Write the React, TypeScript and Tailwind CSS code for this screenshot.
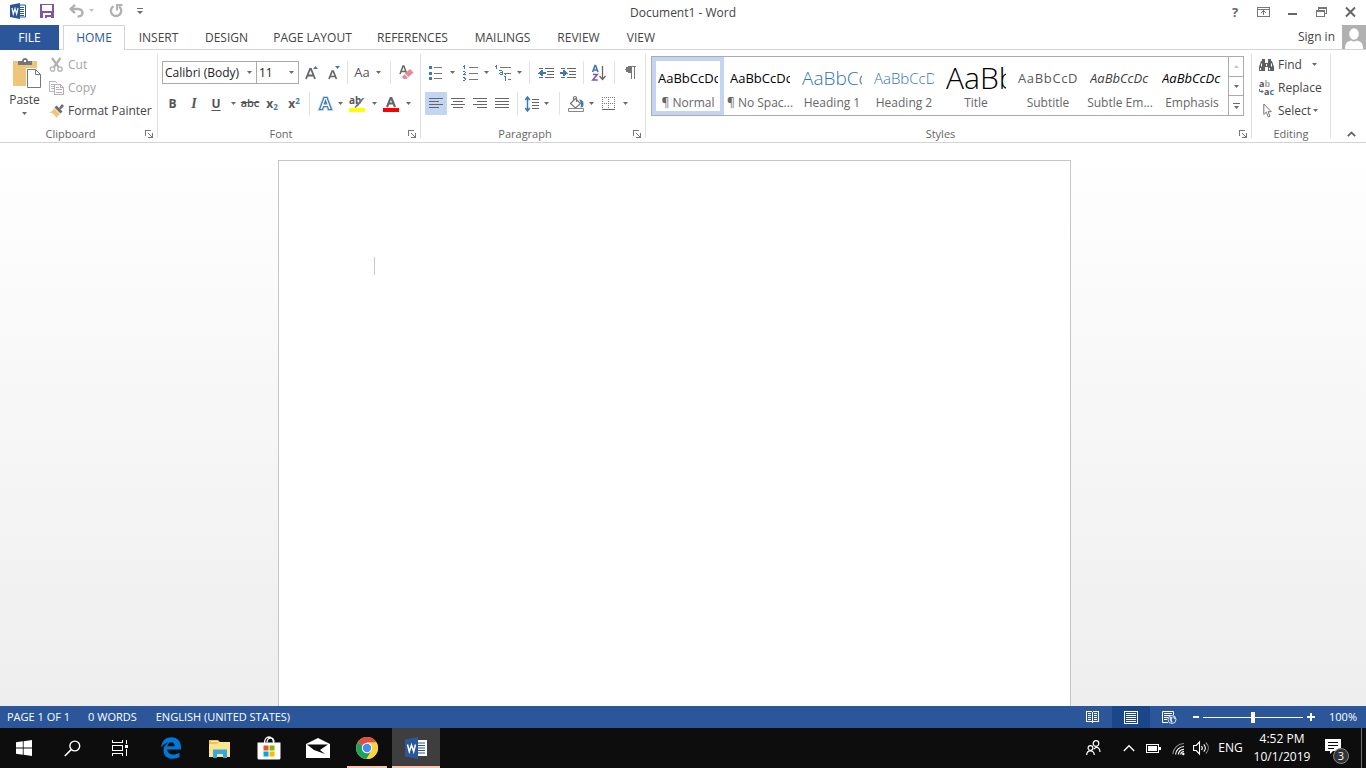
import type { ReactNode } from "react";

type IconProps = { w: number; h: number; crisp?: boolean; children: ReactNode };

function Icon({ w, h, crisp, children }: IconProps) {
  return (
    <svg
      width={w}
      height={h}
      viewBox={`0 0 ${w} ${h}`}
      fill="none"
      aria-hidden="true"
      shapeRendering={crisp ? "crispEdges" : undefined}
      className="block shrink-0 overflow-visible"
    >
      {children}
    </svg>
  );
}

function Caret({ color = "#6a6a6a" }: { color?: string }) {
  return (
    <Icon w={5} h={3}>
      <path d="M0 0h5L2.500 3z" fill={color} />
    </Icon>
  );
}

function CaretButton({ label, className }: { label: string; className: string }) {
  return (
    <button type="button" aria-label={label} className={`flex h-full items-center justify-center ${className}`}>
      <Caret />
    </button>
  );
}

function Tool({ label, className = "w-[22px]", children }: { label: string; className?: string; children: ReactNode }) {
  return (
    <button
      type="button"
      aria-label={label}
      className={`flex h-full shrink-0 items-center justify-center ${className}`}
    >
      {children}
    </button>
  );
}

function Divider({ className = "w-[9px]" }: { className?: string }) {
  return (
    <span className={`flex h-full shrink-0 justify-center ${className}`}>
      <span className="w-px bg-[#e1e1e1]" />
    </span>
  );
}

function Launcher({ label }: { label: string }) {
  return (
    <button type="button" aria-label={label} className="flex w-4 items-center justify-center">
      <Icon w={8} h={8} crisp>
        <path d="M0 0h6v1H1v5H0zM7 3h1v5H3V7h3V6h1zM3 3h1v1h1v1h1v1H5V5H4V4H3z" fill="#777" />
      </Icon>
    </button>
  );
}

type GroupProps = { title: string; launcher?: boolean; className?: string; children: ReactNode };

function Group({ title, launcher = true, className = "", children }: GroupProps) {
  return (
    <section aria-label={title} className={`flex flex-col border-r border-[#e1e1e1] ${className}`}>
      <div className="h-[75px] shrink-0">{children}</div>
      <div className="flex h-[9px] items-center">
        <h2 className="flex-1 text-center text-[11px] leading-4 text-[#666]">{title}</h2>
        {launcher && <Launcher label={`${title} settings`} />}
      </div>
    </section>
  );
}

function WordLogo() {
  return (
    <Icon w={16} h={16}>
      <path d="M9 2h6.500v12H9z" fill="#fff" stroke="#2b579a" />
      <path d="M10 4.500h4M10 6.500h4M10 8.500h4M10 10.500h4M10 12.500h4" stroke="#2b579a" />
      <path d="M0 2 10 0v16L0 14z" fill="#2b579a" />
      <path d="m2 5 1.300 6L5 5.500 6.600 11 8 5" stroke="#fff" strokeWidth="1.200" />
    </Icon>
  );
}

function TitleBar() {
  return (
    <header className="grid h-[25px] shrink-0 grid-cols-[1fr_auto_1fr] items-center">
      <div className="flex h-full items-center pb-1 pl-[10px]">
        <WordLogo />
        <button type="button" aria-label="Save" className="ml-[14px]">
          <Icon w={14} h={14} crisp>
            <path d="M0 0h14v14H0z" fill="#8254a5" />
            <path d="M2 1h10v6H2zM3 9h8v5H3z" fill="#fff" />
            <path d="M5 11h2v3H5z" fill="#8254a5" />
            <path d="M7 11h4v2H7z" fill="#8254a5" />
          </Icon>
        </button>
        <button type="button" aria-label="Undo" className="ml-[15px]">
          <Icon w={15} h={14}>
            <path d="M1.500 5h7.500c6 0 6 7.500-.5 7.500M6 .8 1.600 5 6 9.200" stroke="#b1b1b1" strokeWidth="2.400" />
          </Icon>
        </button>
        <button type="button" aria-label="Undo options" className="ml-[5px]">
          <Caret color="#c3c3c3" />
        </button>
        <button type="button" aria-label="Repeat" className="ml-[15px]">
          <Icon w={14} h={14}>
            <path d="M4.600 2.200A5.200 5.200 0 1 0 10 2.500" stroke="#b1b1b1" strokeWidth="2.400" />
            <path d="M8 6.500V1h5.500" stroke="#b1b1b1" strokeWidth="2" />
          </Icon>
        </button>
        <button type="button" aria-label="Customize Quick Access Toolbar" className="ml-[14px]">
          <Icon w={6} h={6}>
            <path d="M0 0h6v1H0zM0 3h6L3 6z" fill="#6a6a6a" />
          </Icon>
        </button>
      </div>
      <h1 className="text-[12px] text-[#444]">Document1 - Word</h1>
      <div className="flex h-full items-center justify-end gap-[18px] pb-[2px] pr-[10px]">
        <button type="button" className="w-2 text-[13px] font-bold leading-4 text-[#666]" aria-label="Help">
          ?
        </button>
        <button type="button" aria-label="Ribbon display options">
          <Icon w={13} h={10} crisp>
            <path d="M.5.5h12v9H.5zM1 2.500h11M6.500 4v4" stroke="#777" />
            <path d="M6 3h1v1h1v1h1v1H8V5H5v1H4V5h1V4h1z" fill="#777" />
          </Icon>
        </button>
        <button type="button" aria-label="Minimize">
          <Icon w={10} h={10} crisp>
            <path d="M0 6h9v2H0z" fill="#666" />
          </Icon>
        </button>
        <button type="button" aria-label="Restore">
          <Icon w={11} h={10} crisp>
            <path d="M2.500 3V.5h8v6H8M2 1.500h9M.5 3.500h8v6h-8zM0 4.500h8" stroke="#777" />
          </Icon>
        </button>
        <button type="button" aria-label="Close">
          <Icon w={11} h={10}>
            <path d="m1 .5 9 9M10 .5l-9 9" stroke="#666" strokeWidth="2" />
          </Icon>
        </button>
      </div>
    </header>
  );
}

const tabs = [
  { name: "INSERT", width: "w-[67px]" },
  { name: "DESIGN", width: "w-[69px]" },
  { name: "PAGE LAYOUT", width: "w-[103px]" },
  { name: "REFERENCES", width: "w-[97px]" },
  { name: "MAILINGS", width: "w-[83px]" },
  { name: "REVIEW", width: "w-[69px]" },
  { name: "VIEW", width: "w-[56px]" },
];

function TabBar() {
  return (
    <nav className="flex h-[25px] shrink-0 text-[12px] text-[#444]">
      <button type="button" className="w-[59px] bg-[#2b579a] pt-px text-white">
        FILE
      </button>
      <span className="w-1 border-b border-[#d4d4d4]" />
      <button type="button" className="w-[62px] border-x border-t border-[#d4d4d4] bg-white text-[#2b579a]">
        HOME
      </button>
      {tabs.map((tab) => (
        <button
          key={tab.name}
          type="button"
          className={`border-b border-[#d4d4d4] pt-[2px] whitespace-nowrap ${tab.width}`}
        >
          {tab.name}
        </button>
      ))}
      <div className="flex flex-1 justify-end gap-[7px] border-b border-[#d4d4d4]">
        <button type="button">Sign in</button>
        <Icon w={24} h={24}>
          <path d="M0 0h24v24H0z" fill="#b1b1b1" />
          <ellipse cx="12" cy="9" rx="4.800" ry="5.800" fill="#fff" />
          <path d="M3 24c0-6 2-7.500 6-8.500 2 1.300 4 1.300 6 0 4 1 6 2.500 6 8.500z" fill="#fff" />
        </Icon>
      </div>
    </nav>
  );
}

function ClipboardGroup() {
  return (
    <Group title="Clipboard" className="w-[158px]">
      <div className="flex">
        <button type="button" className="flex w-[49px] flex-col items-center pt-1 text-[12px] leading-4 text-[#444]">
          <Icon w={24} h={30}>
            <path d="M0 3h24v25H0z" fill="#efc57b" />
            <path d="M5 7V3h4c0-4 6-4 6 0h4v4z" fill="#777" />
            <path d="M11 2h2v2h-2z" fill="#fff" />
            <path d="M13 10h10l6 6v14H13z" fill="#fff" />
            <path d="M14.500 11.500h8l5 5v13h-13zM22.500 11.500v5h5" fill="#fff" stroke="#777" />
          </Icon>
          <span className="mt-1">Paste</span>
          <span className="mt-1">
            <Caret />
          </span>
        </button>
        <div className="flex flex-col text-[12px] leading-4">
          <button type="button" disabled className="flex h-[23px] items-center gap-1 pb-[2px] text-[#a3a3a3]">
            <Icon w={15} h={15}>
              <path d="m3 1 6.500 9M11.500 1 5 10" stroke="#b1b1b1" strokeWidth="2.200" />
              <circle cx="3.500" cy="12" r="2.200" stroke="#b1b1b1" strokeWidth="1.300" />
              <circle cx="11" cy="12" r="2.200" stroke="#b1b1b1" strokeWidth="1.300" />
            </Icon>
            Cut
          </button>
          <button type="button" disabled className="flex h-[23px] items-center gap-1 pb-[2px] text-[#a3a3a3]">
            <Icon w={15} h={14} crisp>
              <path d="M5.500 10.500h-5V.5h6l2 2" stroke="#bdb5bd" />
              <path d="M2 3.500h3M2 5.500h3M2 7.500h3" stroke="#bdb5bd" />
              <path d="M5.500 3.500h6l3 3v7h-9zM11.500 3.500v3h3M7 6.500h3M7 8.500h6M7 11.500h6" stroke="#b8adb8" fill="#fff" />
            </Icon>
            Copy
          </button>
          <button
            type="button"
            className="flex h-[23px] items-center gap-1 pb-[2px] whitespace-nowrap text-[#444]"
          >
            <Icon w={15} h={14}>
              <path d="m5 4 6 6-4 4C6 10 3 9 0 8c2 0 4-1 5-4z" fill="#efc57b" />
              <path d="m5.500 3.500 2-2 6 6-2 2z" fill="#6a6a6a" />
              <path d="m10 4 3-4 2 2-3.500 3.500z" fill="#6a6a6a" />
            </Icon>
            Format Painter
          </button>
        </div>
      </div>
    </Group>
  );
}

const blue = "#3e7ab5";

function FontGroup() {
  return (
    <Group title="Font" className="w-[263px]">
      <div className="flex flex-col gap-2 pl-1 pt-[7px] text-[#555]">
        <div className="flex h-[23px]">
          <label className="flex w-[95px] items-center border border-[#ababab]">
            <input
              aria-label="Font"
              defaultValue="Calibri (Body)"
              className="w-0 flex-1 pl-[2px] text-[12px] text-[#222] outline-none"
            />
            <span className="pr-1">
              <Caret />
            </span>
          </label>
          <label className="-ml-px flex w-[43px] items-center border border-[#ababab]">
            <input
              aria-label="Font size"
              defaultValue="11"
              className="w-0 flex-1 pl-[2px] text-[12px] text-[#222] outline-none"
            />
            <span className="pr-1">
              <Caret />
            </span>
          </label>
          <Tool label="Grow font" className="w-6">
            <Icon w={13} h={15}>
              <path d="m1 14 4-10h1l4 10M2.500 10.500h6" stroke="#666" strokeWidth="1.800" />
              <path d="M8 4h5l-2.500-3z" fill={blue} />
            </Icon>
          </Tool>
          <Tool label="Shrink font">
            <Icon w={12} h={15}>
              <path d="m1 14 3.200-8h1l3.200 8M2.200 11.500h5" stroke="#666" strokeWidth="1.700" />
              <path d="M7 1h5l-2.500 3z" fill={blue} />
            </Icon>
          </Tool>
          <Divider className="w-[5px]" />
          <Tool label="Change case" className="w-6 text-[13px]">
            Aa
          </Tool>
          <CaretButton label="Change case options" className="w-2" />
          <Divider className="w-4" />
          <Tool label="Clear all formatting" className="w-4">
            <Icon w={15} h={15}>
              <path d="m1 9 3-8h.8l2.700 7M2 6.500h5" stroke="#666" strokeWidth="1.500" />
              <path d="m6 8.500 5-4.500 3.500 3.500-5 4.500z" fill="#e8899a" />
              <path d="m5.300 9.200 3.500 3.500-1.300 1.300H4.700L3 12z" fill="#e8899a" />
            </Icon>
          </Tool>
        </div>
        <div className="flex h-[23px]">
          <Tool label="Bold" className="w-[21px]">
            <span className="text-[12px] font-bold">B</span>
          </Tool>
          <Tool label="Italic">
            <span className="font-['Liberation_Serif',serif] text-[14px] font-bold italic">I</span>
          </Tool>
          <Tool label="Underline">
            <span className="text-[12px] font-bold underline underline-offset-2">U</span>
          </Tool>
          <CaretButton label="Underline options" className="w-3" />
          <Tool label="Strikethrough">
            <span className="text-[11px] font-semibold line-through">abc</span>
          </Tool>
          <Tool label="Subscript">
            <span className="text-[12px] font-bold">
              x<sub className="text-[8px] text-[#3e7ab5]">2</sub>
            </span>
          </Tool>
          <Tool label="Superscript">
            <span className="text-[12px] font-bold">
              x<sup className="text-[8px] text-[#3e7ab5]">2</sup>
            </span>
          </Tool>
          <Divider />
          <Tool label="Text effects">
            <Icon w={15} h={15}>
              <path
                d="M1.500 13.500 6 1.500h3l4.500 12h-3l-1-3h-4l-1 3zM6.300 8h2.400L7.500 4.500z"
                fill="#fff"
                stroke="#c3d9f1"
                strokeWidth="3"
              />
              <path
                d="M1.500 13.500 6 1.500h3l4.500 12h-3l-1-3h-4l-1 3zM6.300 8h2.400L7.500 4.500z"
                fill="#fff"
                stroke={blue}
                strokeWidth="1.200"
              />
            </Icon>
          </Tool>
          <CaretButton label="Text effects options" className="w-2" />
          <Tool label="Text highlight color" className="w-[26px]">
            <Icon w={16} h={16}>
              <text x="0" y="8" fontSize="10" fontWeight="700" fill="#555">
                ab
              </text>
              <path d="m15.500 2-6 7.500-3 2.500-1-1 2.500-3 5.500-6z" fill="#777" />
              <path d="M0 12h16v4H0z" fill="#ff0" />
            </Icon>
          </Tool>
          <CaretButton label="Highlight color options" className="w-2" />
          <Tool label="Font color" className="w-[26px]">
            <Icon w={16} h={16}>
              <path d="m4 11 3.600-9h.8l3.600 9M5.300 7.500h5.400" stroke="#666" strokeWidth="2.100" />
              <path d="M0 12h16v4H0z" fill="#f00" />
            </Icon>
          </Tool>
          <CaretButton label="Font color options" className="w-2" />
        </div>
      </div>
    </Group>
  );
}

function AlignIcon({ d }: { d: string }) {
  return (
    <Icon w={14} h={11} crisp>
      <path d={d} stroke="#666" />
    </Icon>
  );
}

function ParagraphGroup() {
  return (
    <Group title="Paragraph" className="w-[225px]">
      <div className="flex flex-col gap-2 pl-1 pt-[7px]">
        <div className="flex h-[23px]">
          <Tool label="Bullets">
            <Icon w={14} h={15} crisp>
              <path d="M5 2.500h8M5 8.500h8M5 13.500h8" stroke="#777" />
              <path d="M0 1h3v3H0zM0 7h3v3H0zM0 12h3v3H0z" fill={blue} />
            </Icon>
          </Tool>
          <CaretButton label="Bullet options" className="w-[11px]" />
          <Tool label="Numbering" className="w-6">
            <Icon w={15} h={16} crisp>
              <path d="M6 2.500h9M6 8.500h9M6 14.500h9" stroke="#777" />
              <path
                d="M1 0h1v4H1zM0 1h1v1H0zM0 6h2v1H0zM2 7h1v1H2zM1 8h1v1H1zM0 9h3v1H0zM0 12h2v1H0zM2 13h1v2H2zM1 13h1v1H1zM0 15h2v1H0z"
                fill={blue}
              />
            </Icon>
          </Tool>
          <CaretButton label="Numbering options" className="w-[9px]" />
          <Tool label="Multilevel list" className="w-6">
            <Icon w={17} h={16} crisp>
              <path d="M5 2.500h11M9 8.500h7M13 14.500h3" stroke="#777" />
              <path
                d="M1 0h1v4H1zM0 1h1v1H0zM4 5h3v1H4zM7 6h1v4H7zM5 7h2v1H5zM4 8h1v1H4zM5 9h2v1H5zM10 9h1v1h-1zM9 11h2v5h-1v-4H9z"
                fill={blue}
              />
            </Icon>
          </Tool>
          <CaretButton label="Multilevel options" className="w-2" />
          <Divider className="w-3" />
          <Tool label="Decrease indent">
            <Icon w={16} h={12} crisp>
              <path d="M1 1.500h4M7 1.500h9M9 4.500h7M9 7.500h7M1 10.500h4M7 10.500h9" stroke="#666" />
              <path d="M0 6h1V5h1V4h1V3h2v2h3v2H5v2H3V8H2V7H0z" fill={blue} />
            </Icon>
          </Tool>
          <Tool label="Increase indent">
            <Icon w={16} h={12} crisp>
              <path d="M1 1.500h4M7 1.500h9M9 4.500h7M9 7.500h7M1 10.500h4M7 10.500h9" stroke="#666" />
              <path d="M8 6H7V5H6V4H5V3H3v2H0v2h3v2h2V8h1V7h2z" fill={blue} />
            </Icon>
          </Tool>
          <Divider />
          <Tool label="Sort">
            <Icon w={14} h={16}>
              <path d="m.6 7 2.400-6.500h.6L6 7M1.500 5h3.700" stroke={blue} strokeWidth="1.600" />
              <path d="M1 9.500h4.300l-4.500 5.500h5" stroke="#8254a5" strokeWidth="1.500" />
              <path d="M10.500 1v13M7.500 11l3 3.500 3-3.500" stroke="#666" strokeWidth="1.300" />
            </Icon>
          </Tool>
          <Divider />
          <Tool label="Show paragraph marks">
            <Icon w={11} h={13} crisp>
              <path d="M4 0h7v1h-1v12H9V1H7v12H6V7H4C-1 7-1 0 4 0z" fill="#777" />
            </Icon>
          </Tool>
        </div>
        <div className="flex h-[23px]">
          <Tool label="Align left" className="w-[22px] bg-[#c2d5f2]">
            <AlignIcon d="M0 .5h14M0 3.500h10M0 6.500h14M0 9.500h10" />
          </Tool>
          <Tool label="Center">
            <AlignIcon d="M0 .5h14M2 3.500h10M0 6.500h14M2 9.500h10" />
          </Tool>
          <Tool label="Align right">
            <AlignIcon d="M0 .5h14M4 3.500h10M0 6.500h14M4 9.500h10" />
          </Tool>
          <Tool label="Justify">
            <AlignIcon d="M0 .5h14M0 3.500h14M0 6.500h14M0 9.500h14" />
          </Tool>
          <Divider />
          <Tool label="Line spacing" className="w-5">
            <Icon w={14} h={16}>
              <path d="M2.500 1v14M.3 4l2.200-3 2.300 3M.3 12l2.200 3 2.300-3" stroke={blue} strokeWidth="1.500" />
              <path d="M7 3.500h7M7 6.500h7M7 9.500h7M7 12.500h7" stroke="#666" />
            </Icon>
          </Tool>
          <CaretButton label="Line spacing options" className="w-2" />
          <Divider className="w-[18px]" />
          <Tool label="Shading" className="w-4">
            <Icon w={16} h={16}>
              <path d="m2.500 7.500 5-5 5 5-5 4.500z" stroke="#777" strokeWidth="1.200" fill="#fff" />
              <path d="M5.500 5V2c0-2 3-2 3 0v4" stroke="#777" strokeWidth="1.200" />
              <path d="M11 3.500c4 0 5.500 3 4 7.500l-2.500.5c1-3 .5-5-1.500-8z" fill={blue} />
              <path d="M.5 12.500h15v3H.5z" fill="#fff" stroke="#888" />
            </Icon>
          </Tool>
          <CaretButton label="Shading options" className="w-[14px]" />
          <Tool label="Borders" className="w-5">
            <Icon w={13} h={13} crisp>
              <path d="M0 .5h13M0 6.500h13M.5 0v12M6.500 0v12M12.500 0v12" stroke="#777" strokeDasharray="1 1" />
              <path d="M0 12.500h13" stroke="#666" />
            </Icon>
          </Tool>
          <CaretButton label="Border options" className="w-[14px]" />
        </div>
      </div>
    </Group>
  );
}

const styles = [
  { name: "¶ Normal", sample: "AaBbCcDc", look: "text-[13px] text-black" },
  { name: "¶ No Spac...", sample: "AaBbCcDc", look: "text-[13px] text-black" },
  { name: "Heading 1", sample: "AaBbCc", look: "text-[19px] font-light text-[#2e74b5]" },
  { name: "Heading 2", sample: "AaBbCcD", look: "text-[15px] font-light text-[#2e74b5]" },
  { name: "Title", sample: "AaBb", look: "text-[30px] font-light text-black" },
  { name: "Subtitle", sample: "AaBbCcD", look: "text-[13px] tracking-wider text-[#5a5a5a]" },
  { name: "Subtle Em...", sample: "AaBbCcDc", look: "text-[13px] italic text-[#404040]" },
  { name: "Emphasis", sample: "AaBbCcDc", look: "text-[13px] italic text-black" },
];

function StylesGroup() {
  return (
    <Group title="Styles" className="min-w-0 flex-1">
      <div className="pt-[2px] pr-[7px] pl-[5px]">
        <div className="flex h-[60px] border border-[#ababab]">
          <div className="flex min-w-0 flex-1 overflow-hidden">
            {styles.map((style, i) => (
              <button
                key={style.name}
                type="button"
                className={`flex w-[72px] shrink-0 flex-col items-center border-4 ${
                  i === 0 ? "border-[#c2d5f2]" : "border-transparent"
                }`}
              >
                <span
                  className={`flex h-[34px] w-[60px] items-center overflow-hidden whitespace-nowrap leading-none ${style.look}`}
                >
                  {style.sample}
                </span>
                <span className="text-[12px] leading-4 whitespace-nowrap text-[#666]">{style.name}</span>
              </button>
            ))}
          </div>
          <div className="flex w-[15px] flex-col border-l border-[#ababab]">
            <button type="button" aria-label="Previous styles" className="flex flex-1 items-center justify-center">
              <Icon w={5} h={3}>
                <path d="M0 3h5L2.500 0z" fill="#c6c6c6" />
              </Icon>
            </button>
            <button
              type="button"
              aria-label="Next styles"
              className="flex flex-1 items-center justify-center border-y border-[#ababab]"
            >
              <Caret />
            </button>
            <button type="button" aria-label="More styles" className="flex flex-1 items-center justify-center">
              <Icon w={7} h={6}>
                <path d="M0 0h7v1H0zM1 3h5L3.500 6z" fill="#6a6a6a" />
              </Icon>
            </button>
          </div>
        </div>
      </div>
    </Group>
  );
}

function EditingGroup() {
  return (
    <Group title="Editing" launcher={false} className="w-[79px]">
      <div className="flex flex-col pl-[7px] text-[12px] leading-4 whitespace-nowrap text-[#444]">
        <button type="button" className="flex h-[23px] items-center gap-1 pb-[2px]">
          <Icon w={15} h={12}>
            <path d="M2 2h4v2h3V2h4l2 6v4H9V8H6v4H0V8z" fill="#5f5f5f" />
            <path d="M3 0h3v2H3zM9 0h3v2H9z" fill="#5f5f5f" />
            <path d="M2.500 4.500v3M12.500 4.500v3M1.500 9v2M10.500 9v2M7.500 5v2" stroke="#fff" />
          </Icon>
          <span className="mr-[6px]">Find</span>
          <Caret />
        </button>
        <button type="button" className="flex h-[23px] items-center gap-1 pb-[2px]">
          <Icon w={15} h={16}>
            <text x="0" y="7" fontSize="9" fontWeight="700" fill="#555">
              a<tspan fill="#aaa">b</tspan>
            </text>
            <text x="5" y="15" fontSize="9" fontWeight="700" fill="#555">
              a<tspan fill={blue}>c</tspan>
            </text>
            <path d="M.5 9v2.500H4M2.500 10 4 11.500 2.500 13" stroke={blue} />
          </Icon>
          Replace
        </button>
        <button type="button" className="flex h-[23px] items-center pb-[2px]">
          <span className="flex w-[19px] justify-center pr-[2px]">
            <Icon w={9} h={15}>
              <path d="M.8 1v10.500l2.500-2.300 2 4.800 1.700-.8-2-4.500h3.300z" stroke="#777" />
            </Icon>
          </span>
          <span className="mr-[2px]">Select</span>
          <Caret />
        </button>
      </div>
    </Group>
  );
}

function Ribbon() {
  return (
    <div className="flex h-[93px] shrink-0 border-b border-[#d4d4d4] bg-white py-1">
      <ClipboardGroup />
      <FontGroup />
      <ParagraphGroup />
      <StylesGroup />
      <EditingGroup />
      <div className="flex w-[35px] items-end justify-center pl-[5px]">
        <button type="button" aria-label="Collapse the ribbon" className="pb-[1px]">
          <Icon w={9} h={6}>
            <path d="M.8 5.200 4.500 1.500l3.700 3.700" stroke="#666" strokeWidth="1.800" />
          </Icon>
        </button>
      </div>
    </div>
  );
}

function StatusBar() {
  return (
    <footer className="flex h-[22px] shrink-0 items-center bg-[#2b579a] text-[11px] text-white">
      <span className="pl-[7px]">PAGE 1 OF 1</span>
      <span className="pl-[18px]">0 WORDS</span>
      <span className="pl-[19px]">ENGLISH (UNITED STATES)</span>
      <div className="ml-auto flex h-full items-center">
        <button type="button" aria-label="Read mode" className="flex h-full w-[39px] items-center justify-center">
          <Icon w={13} h={12} crisp>
            <path
              d="M.5.5h5l1 1 1-1h5v10h-5l-1 1-1-1h-5zM6.500 1v11M2 2.500h3M2 4.500h3M2 6.500h3M2 8.500h3M8 2.500h3M8 4.500h3M8 6.500h3M8 8.500h3"
              stroke="#fff"
            />
          </Icon>
        </button>
        <button
          type="button"
          aria-label="Print layout"
          className="flex h-full w-[38px] items-center justify-center bg-[#19478a]"
        >
          <Icon w={14} h={13} crisp>
            <path d="M.5.5h13v12H.5zM2 2.500h10M2 4.500h10M2 6.500h10M2 8.500h10M2 10.500h10" stroke="#fff" />
          </Icon>
        </button>
        <button type="button" aria-label="Web layout" className="flex h-full w-[38px] items-center justify-center">
          <Icon w={15} h={13}>
            <path d="M6 11.500H.5V.5h11V4M2 2.500h8M2 4.500h8M2 6.500h4M2 8.500h3" stroke="#fff" />
            <circle cx="10" cy="8.500" r="4" fill="#2b579a" stroke="#d5dfee" />
            <path d="M7.500 6.500c2-1.500 4-.5 2.500 1.500-1 1 1.500 2 0 4-1.500-1-2.500-3-2.500-5.500zM11 5c2 .5 2.500 2 2.500 3.500-1.500 0-2-1.500-2.500-3.500z" fill="#d5dfee" />
          </Icon>
        </button>
        <button type="button" aria-label="Zoom out" className="ml-[5px] flex h-full items-center">
          <Icon w={6} h={2} crisp>
            <path d="M0 0h6v2H0z" fill="#fff" />
          </Icon>
        </button>
        <input
          type="range"
          aria-label="Zoom"
          min={10}
          max={190}
          defaultValue={100}
          className="mx-1 h-[11px] w-[100px] appearance-none bg-[linear-gradient(#fff,#fff)] bg-[length:100%_1px] bg-center bg-no-repeat [&::-webkit-slider-thumb]:h-[11px] [&::-webkit-slider-thumb]:w-1 [&::-webkit-slider-thumb]:appearance-none [&::-webkit-slider-thumb]:bg-white"
        />
        <button type="button" aria-label="Zoom in" className="flex h-full items-center">
          <Icon w={8} h={8} crisp>
            <path d="M3 0h2v3h3v2H5v3H3V5H0V3h3z" fill="#fff" />
          </Icon>
        </button>
        <button type="button" className="w-[51px] pr-[9px] text-right">
          100%
        </button>
      </div>
    </footer>
  );
}

function TaskButton({
  label,
  className = "w-12",
  children,
}: {
  label: string;
  className?: string;
  children: ReactNode;
}) {
  return (
    <button type="button" aria-label={label} className={`flex items-center justify-center ${className}`}>
      {children}
    </button>
  );
}

function Taskbar() {
  return (
    <footer className="flex h-10 shrink-0 justify-between bg-[#0d0d0d] text-white">
      <div className="flex">
        <TaskButton label="Start">
          <Icon w={16} h={16}>
            <path
              d="M0 2.300 6.800 1.300v6.300H0zM7.600 1.200 16 0v7.600H7.600zM0 8.400h6.800v6.300L0 13.700zM7.600 8.400H16V16l-8.400-1.200z"
              fill="#fff"
            />
          </Icon>
        </TaskButton>
        <TaskButton label="Search">
          <Icon w={17} h={17}>
            <circle cx="10.800" cy="6" r="4.900" stroke="#fff" strokeWidth="1.400" />
            <path d="M7.200 9.600.8 16" stroke="#fff" strokeWidth="1.500" />
          </Icon>
        </TaskButton>
        <TaskButton label="Task view">
          <Icon w={17} h={16} crisp>
            <path d="M.5 0v2.500h10V0M.5 5.500h10v5H.5zM.5 16v-2.500h10V16M14.500 0v4M14.500 9v7" stroke="#fff" />
            <path d="M13 5h3v3h-3z" fill="#fff" />
          </Icon>
        </TaskButton>
        <div className="ml-[3px] flex gap-px">
          <TaskButton label="Edge">
            <Icon w={20} h={22}>
              <path
                d="M0 10.500C1 3 5 .2 10.500.2 17 .2 20 5 20 10v2.600H6.200c.3 5.200 7 6.400 12.300 3.200v4.300C10.500 24 2.500 21 2.500 13.500c0-4 2.500-6.500 5.300-8C4.500 6 2 7.500 0 10.500zM6.300 9.200h7.400c0-5.400-6.600-5-7.400 0z"
                fill="#0078d7"
              />
            </Icon>
          </TaskButton>
          <TaskButton label="File Explorer">
            <Icon w={22} h={19}>
              <path d="M0 1h9l2 2h10v15H0z" fill="#f3c04c" />
              <path d="M0 5h8l2-2h11v15H0z" fill="#fde48f" />
              <path d="M4 10.500h14V19h-4v-4H8v4H4z" fill="#35a8e0" />
              <path d="M2 2h7v1H2z" fill="#fff3c4" />
            </Icon>
          </TaskButton>
          <TaskButton label="Microsoft Store">
            <Icon w={24} h={24}>
              <path d="M7.500 7c0-8 9-8 9 0M10 6.500c0-6 7-6 7 0" stroke="#fff" strokeWidth="1.300" />
              <path d="M.5 6.500h23V22q0 1.500-1.500 1.500H2q-1.500 0-1.500-1.500z" fill="#fff" />
              <path d="M6.500 9.500h5v5h-5z" fill="#f25022" />
              <path d="M12.500 9.500h5v5h-5z" fill="#7fba00" />
              <path d="M6.500 15.500h5v5h-5z" fill="#00a4ef" />
              <path d="M12.500 15.500h5v5h-5z" fill="#ffb900" />
            </Icon>
          </TaskButton>
          <TaskButton label="Mail">
            <Icon w={24} h={20}>
              <path d="M0 6 12 0l12 6v14H0z" fill="#fff" />
              <path d="M1 6.500h21L14 12l5 4L8 12z" fill="#0d0d0d" />
            </Icon>
          </TaskButton>
          <TaskButton label="Chrome" className="mx-1 w-10 shadow-[inset_0_-2px_#fac4b1]">
            <Icon w={22} h={22}>
              <circle cx="11" cy="11" r="11" fill="#fdd33c" />
              <path d="M11 11 1.500 5.500A11 11 0 0 1 20.500 5.500H11z" fill="#dd5044" />
              <path d="M1.500 5.500A11 11 0 0 0 10.500 22l5-8.400L11 11z" fill="#1fa15d" />
              <path d="M20.500 5.500H11l4.600 8L10.500 22A11 11 0 0 0 20.500 5.500z" fill="#fdd33c" />
              <circle cx="11" cy="11" r="5.200" fill="#fff" />
              <circle cx="11" cy="11" r="4.200" fill="#4a8af4" />
            </Icon>
          </TaskButton>
          <TaskButton label="Word" className="w-12 bg-[#3e3e3e] shadow-[inset_0_-2px_#fac4b1]">
            <Icon w={22} h={22}>
              <path d="M12 3h10v16H12z" fill="#fff" />
              <path d="M13 6h7M13 8.500h7M13 11h7M13 13.500h7M13 16h7" stroke="#2b579a" />
              <path d="M0 2.500 13 0v22L0 19.500z" fill="#2b579a" />
              <path d="m2.500 7.500 1.800 7 2.200-6.500 2.200 6.500 1.800-7" stroke="#fff" strokeWidth="1.500" />
            </Icon>
          </TaskButton>
        </div>
      </div>
      <div className="flex items-center text-[12px]">
        <button type="button" aria-label="People">
          <Icon w={15} h={16}>
            <circle cx="4.500" cy="8" r="2.400" stroke="#fff" strokeWidth="1.200" />
            <circle cx="10" cy="3.500" r="2.800" stroke="#fff" strokeWidth="1.200" />
            <path d="M.7 15c0-5.500 7.600-5.500 7.600 0M8 9c3-3.500 6-1 6 3" stroke="#fff" strokeWidth="1.200" />
          </Icon>
        </button>
        <button type="button" aria-label="Show hidden icons" className="ml-[22px]">
          <Icon w={12} h={8}>
            <path d="m.8 7 5.200-5.300L11.200 7" stroke="#fff" strokeWidth="1.300" />
          </Icon>
        </button>
        <button type="button" aria-label="Battery" className="ml-[11px]">
          <Icon w={15} h={9} crisp>
            <path d="M.5.5h12v8H.5z" stroke="#fff" />
            <path d="M2 2h9v5H2zM13 3h2v3h-2z" fill="#fff" />
          </Icon>
        </button>
        <button type="button" aria-label="Network" className="ml-[11px]">
          <Icon w={13} h={13}>
            <path d="M.8 12A11.500 11.500 0 0 1 12 1.500" stroke="#888" strokeWidth="1.200" />
            <path
              d="M3.600 12.500A8.500 8.500 0 0 1 12 4.500M6.300 12.500A6 6 0 0 1 12 7.300"
              stroke="#fff"
              strokeWidth="1.200"
            />
            <path d="M8.600 12.500A3.500 3.500 0 0 1 12 9.500" stroke="#fff" strokeWidth="1.200" />
            <circle cx="11.300" cy="12" r="1.200" fill="#fff" />
          </Icon>
        </button>
        <button type="button" aria-label="Volume" className="ml-2">
          <Icon w={17} h={14}>
            <path d="M.6 4.500h2.600L6.500 1v12L3.200 9.500H.6z" stroke="#fff" strokeWidth="1.100" />
            <path d="M8.500 5c1 1.200 1 2.800 0 4M10.700 3.300c2 2.200 2 5.200 0 7.400" stroke="#fff" strokeWidth="1.100" />
            <path d="M12.800 1.500c3.300 3.300 3.300 7.700 0 11" stroke="#888" strokeWidth="1.100" />
          </Icon>
        </button>
        <button type="button" className="w-[41px] text-center">
          ENG
        </button>
        <button type="button" className="w-[62px] text-center leading-[18px]">
          4:52 PM
          <br />
          10/1/2019
        </button>
        <button type="button" aria-label="Notifications" className="relative ml-3 mr-3 h-10 w-[24px]">
          <span className="flex pb-1">
            <Icon w={16} h={15}>
              <path d="M0 0h16v12H8l-3 3v-3H0z" fill="#fff" />
              <path d="M3 3.500h10M3 6.500h10M3 9.500h6" stroke="#0d0d0d" />
            </Icon>
          </span>
          <span className="absolute right-0 bottom-1 flex size-4 items-center justify-center rounded-full border border-[#888] bg-[#333] text-[11px]">
            3
          </span>
        </button>
        <span className="mr-1 h-full w-px bg-[#6e6e6e]" />
      </div>
    </footer>
  );
}

export default function App() {
  return (
    <div className="flex h-screen flex-col overflow-hidden bg-white font-['Open_Sans','Noto_Sans',sans-serif] leading-normal">
      <TitleBar />
      <TabBar />
      <Ribbon />
      <main className="flex min-h-0 flex-1 justify-center overflow-hidden bg-linear-to-b from-white to-[#eeeeee] pt-[17px] pr-[17px]">
        <article
          aria-label="Document"
          className="w-[793px] border-x border-t border-[#c6c6c6] bg-white px-[95px] pt-24"
        >
          <span className="block h-[18px] w-px bg-[#c8c8c8]" />
        </article>
      </main>
      <StatusBar />
      <Taskbar />
    </div>
  );
}
